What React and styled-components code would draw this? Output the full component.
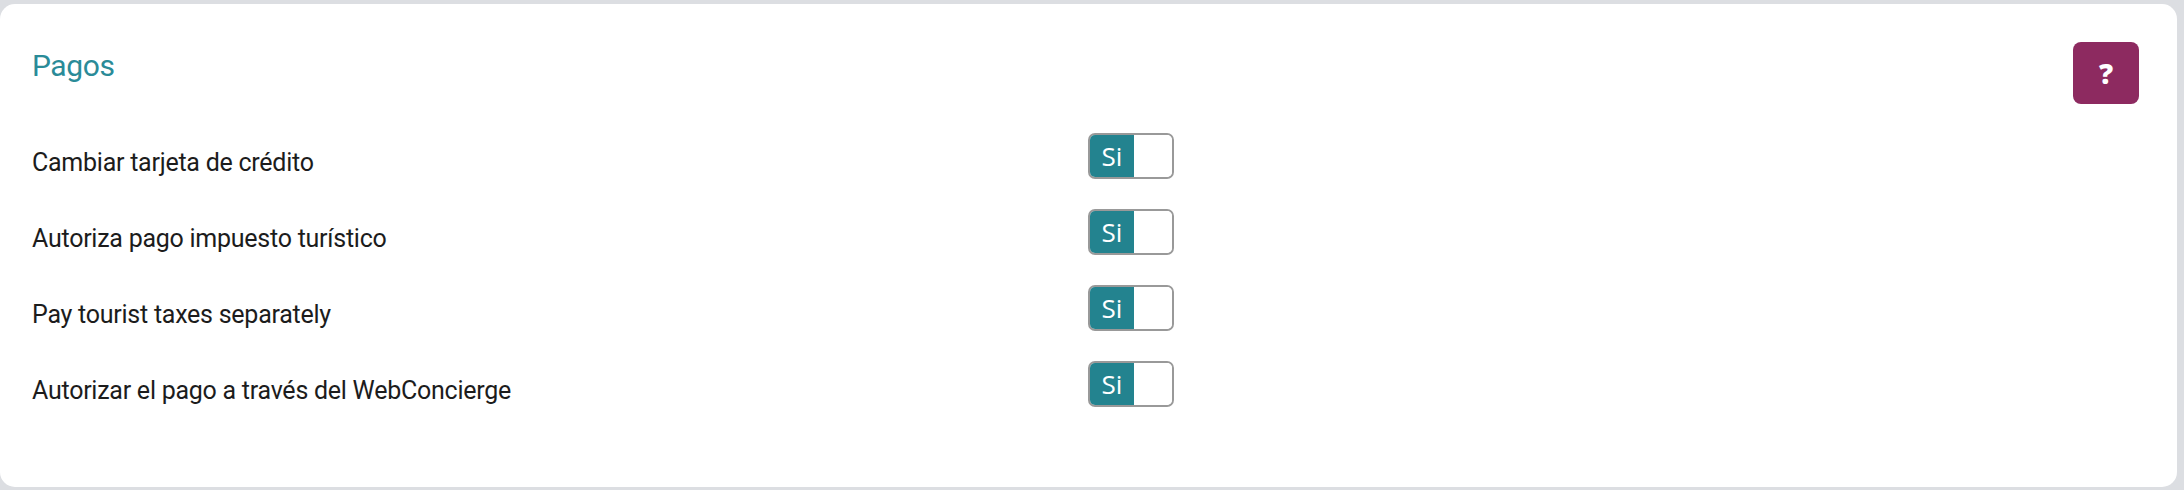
import React from "react";
import styled, { createGlobalStyle } from "styled-components";

const GlobalStyle = createGlobalStyle`
  html, body {
    margin: 0;
    padding: 0;
    background: #dcdee2;
  }
  body {
    font-family: Roboto, "Liberation Sans", sans-serif;
  }
`;

const Card = styled.section`
  box-sizing: border-box;
  margin: 4px 7px 0 0;
  height: 483px;
  background: #ffffff;
  border-radius: 15px;
  padding: 38px 38px 0 32px;
`;

const Header = styled.header`
  display: flex;
  justify-content: space-between;
  align-items: flex-start;
`;

const Title = styled.h2`
  margin: 4px 0 0 0;
  font-family: Roboto, "Liberation Sans", sans-serif;
  font-weight: 400;
  font-size: 30px;
  line-height: 40px;
  color: #2a8b98;
  letter-spacing: -0.4px;
`;

const HelpButton = styled.button`
  width: 66px;
  height: 62px;
  border: none;
  border-radius: 8px;
  background: #8d2a60;
  color: #ffffff;
  font-family: "Open Sans", "Liberation Sans", sans-serif;
  font-weight: 800;
  font-size: 28px;
  display: flex;
  align-items: center;
  justify-content: center;
  padding: 0;
  cursor: pointer;
`;

const List = styled.div`
  margin-top: 29px;
  display: flex;
  flex-direction: column;
  gap: 30px;
`;

const Row = styled.div`
  display: grid;
  grid-template-columns: 1056px auto;
  align-items: center;
  height: 46px;
`;

const Label = styled.span`
  padding-top: 13px;
  font-family: Roboto, "Liberation Sans", sans-serif;
  font-size: 25px;
  letter-spacing: -0.25px;
  color: #1c1c1c;
`;

const Toggle = styled.div`
  box-sizing: border-box;
  width: 86px;
  height: 46px;
  border: 2px solid #999999;
  border-radius: 7px;
  overflow: hidden;
  display: flex;
`;

const ToggleOn = styled.span`
  width: 44px;
  background: #23838f;
  color: #ffffff;
  font-family: "Open Sans", "Liberation Sans", sans-serif;
  font-size: 26px;
  display: flex;
  align-items: center;
  justify-content: center;
`;

const ToggleOff = styled.span`
  flex: 1;
  background: #ffffff;
`;

const rows = [
  "Cambiar tarjeta de crédito",
  "Autoriza pago impuesto turístico",
  "Pay tourist taxes separately",
  "Autorizar el pago a través del WebConcierge",
];

export default function App() {
  return (
    <>
      <GlobalStyle />
      <Card>
        <Header>
          <Title>Pagos</Title>
          <HelpButton>?</HelpButton>
        </Header>
        <List>
          {rows.map((r) => (
            <Row key={r}>
              <Label>{r}</Label>
              <Toggle>
                <ToggleOn>Si</ToggleOn>
                <ToggleOff />
              </Toggle>
            </Row>
          ))}
        </List>
      </Card>
    </>
  );
}
